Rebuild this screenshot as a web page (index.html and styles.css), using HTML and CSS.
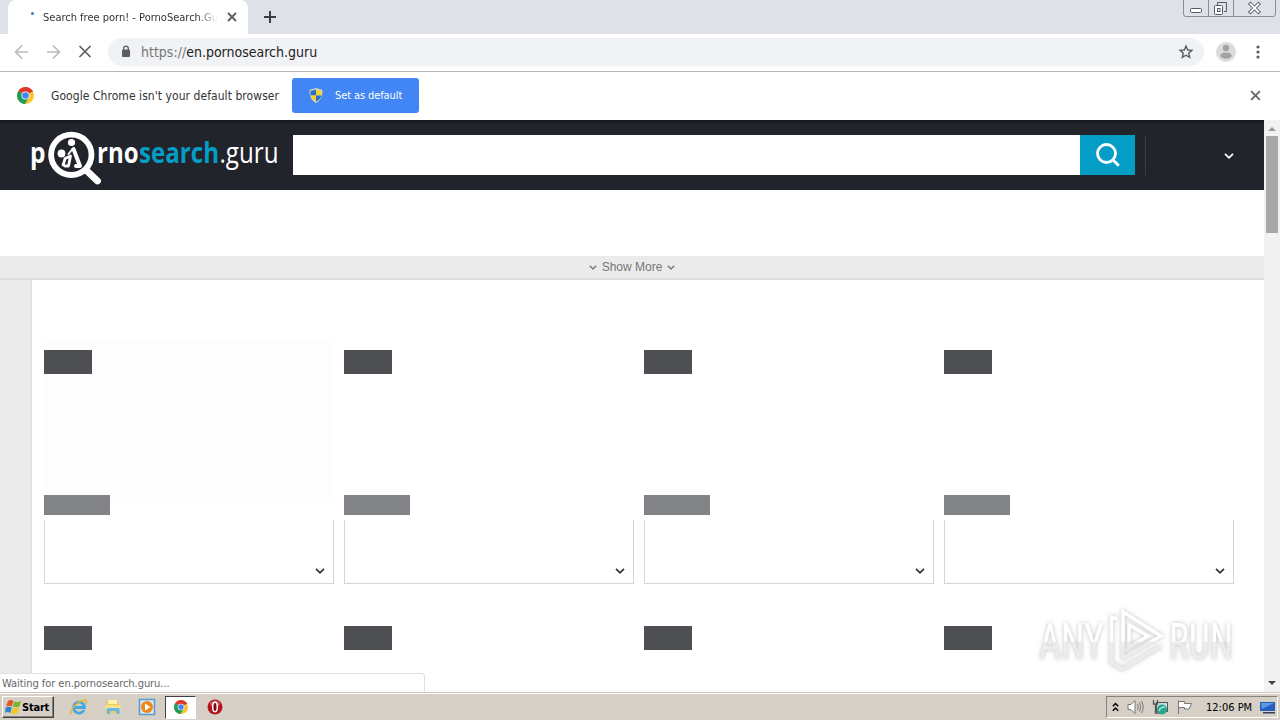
FILE: index.html
```html
<!DOCTYPE html>
<html lang="en">
<head>
    <meta charset="UTF-8">
    <title>Search free porn! - PornoSearch.Guru</title>
    <link rel="stylesheet" href="styles.css">
</head>
<body>
    <svg width="0" height="0" class="defs">
        <symbol id="chrome" viewBox="0 0 16 16">
            <circle cx="8" cy="8" r="8" fill="#fbc52d"/>
            <path d="M8 8 L1.1 4 A8 8 0 0 1 14.9 4 Z" fill="#db3a2d"/>
            <path d="M8 8 L1.1 4 A8 8 0 0 0 7.5 16 L11 10 Z" fill="#1d9d59"/>
            <path d="M8 4 H14.9" stroke="#db3a2d" stroke-width="1"/>
            <circle cx="8" cy="8" r="3.8" fill="#fff"/>
            <circle cx="8" cy="8" r="3.1" fill="#4285f4"/>
        </symbol>
        <symbol id="chevron" viewBox="0 0 10 6">
            <path d="M1 .8 L5 4.8 L9 .8" fill="none" stroke="currentColor" stroke-width="1.7"/>
        </symbol>
        <symbol id="cross" viewBox="0 0 10 10">
            <path d="M1 1 L9 9 M9 1 L1 9" fill="none" stroke="currentColor" stroke-width="1.8"/>
        </symbol>
    </svg>

    <!-- Tab strip -->
    <div class="tabstrip">
        <div class="tab">
            <span class="spinner"></span>
            <span class="tab-title">Search free porn! - PornoSearch.Guru</span>
            <svg class="tab-close" width="10" height="10"><use href="#cross"/></svg>
        </div>
        <svg class="new-tab" width="12" height="12" viewBox="0 0 12 12"><path d="M6 0V12M0 6H12" stroke="#3a3d42" stroke-width="2"/></svg>
        <svg class="window-buttons" width="93" height="17" viewBox="0 0 93 17" fill="none">
            <path d="M.5 0V14Q.5 16.500 3 16.500H90Q92.500 16.500 92.500 14V0M25.500 0V16M50.500 0V16" stroke="#8b8e95"/>
            <rect x="7.500" y="8.500" width="11" height="4" rx="1" fill="#fff" stroke="#555963"/>
            <path d="M34.500 5V2.500H43.500V11.500H41" stroke="#555963"/>
            <rect x="31.500" y="5.500" width="8" height="9" rx="1" fill="#fff" stroke="#555963"/>
            <rect x="34.500" y="8.500" width="2.500" height="3" stroke="#555963"/>
            <path d="M67.500 4L75.500 12M75.500 4L67.500 12" stroke="#555963" stroke-width="3.600" stroke-linecap="square"/>
            <path d="M67.500 4L75.500 12M75.500 4L67.500 12" stroke="#fff" stroke-width="1.800" stroke-linecap="square"/>
        </svg>
    </div>

    <!-- Toolbar -->
    <div class="toolbar">
        <svg width="78" height="16" viewBox="0 0 78 16" fill="none" stroke-width="1.700">
            <path d="M14 8H1.500M8 1.500L1.500 8L8 14.500M33 8H45.500M39 1.500L45.500 8L39 14.500" stroke="#b9bbbd"/>
            <path d="M65.500 2L76.500 13M76.500 2L65.500 13" stroke="#5a5d61"/>
        </svg>
        <div class="omnibox">
            <svg width="10" height="13" viewBox="0 0 10 13"><rect x="1" y="4.500" width="8" height="7.500" rx="1" fill="#5a5e63"/><path d="M2.700 5V3.500A2.300 2.300 0 0 1 7.300 3.500V5" fill="none" stroke="#5a5e63" stroke-width="1.300"/></svg>
            <span class="url"><span class="scheme">https://</span>en.pornosearch.guru</span>
            <svg class="star" width="16" height="16" viewBox="0 0 16 16"><path d="M8 2L9.700 6L13.900 6.400L10.700 9.200L11.700 13.400L8 11.200L4.300 13.400L5.300 9.200L2.100 6.400L6.300 6Z" fill="none" stroke="#5a5d61" stroke-width="1.400"/></svg>
        </div>
        <svg class="avatar" width="20" height="20" viewBox="0 0 20 20"><circle cx="10" cy="10" r="10" fill="#dcdcdc"/><circle cx="10" cy="6" r="3.200" fill="#a3a3a3"/><ellipse cx="10" cy="13.600" rx="5.700" ry="3.200" fill="#a3a3a3"/></svg>
        <svg width="4" height="14" viewBox="0 0 4 14" fill="#5a5d61"><circle cx="2" cy="2" r="1.600"/><circle cx="2" cy="7" r="1.600"/><circle cx="2" cy="12" r="1.600"/></svg>
    </div>

    <div class="infobar">
        <svg width="17" height="17"><use href="#chrome"/></svg>
        <span class="info-text">Google Chrome isn't your default browser</span>
        <button class="default-button">
            <svg width="14" height="15" viewBox="0 0 14 15">
                <path d="M7 0L13.500 2Q14 11 7 15Q0 11 .5 2Z" fill="#d5d9c4"/>
                <path d="M7 1.500V7.500H1.500V3Z" fill="#2c6fc9"/><path d="M7 1.500V7.500H12.500V3Z" fill="#f5d22e"/>
                <path d="M7 7.500V13.700Q2 11 1.600 7.500Z" fill="#f5d22e"/><path d="M7 7.500V13.700Q12 11 12.400 7.500Z" fill="#2c6fc9"/>
            </svg>
            <span>Set as default</span>
        </button>
        <svg class="info-close" width="11" height="11"><use href="#cross"/></svg>
    </div>

    <!-- Page -->
    <div class="viewport">
        <div class="page">
            <header class="site-header">
                <svg class="logo" width="250" height="60" viewBox="0 0 250 60">
                    <g class="logo-text">
                        <text x="0" y="38" textLength="15.500" lengthAdjust="spacingAndGlyphs" class="bold">p</text>
                        <text x="67" y="38" textLength="41.500" lengthAdjust="spacingAndGlyphs" class="bold">rno</text>
                        <text x="109" y="38" textLength="80" lengthAdjust="spacingAndGlyphs" class="bold blue">search</text>
                        <text x="189.500" y="38" textLength="59" lengthAdjust="spacingAndGlyphs">.guru</text>
                    </g>
                    <circle cx="41.300" cy="29.800" r="20.200" fill="none" stroke="#fff" stroke-width="5.800"/>
                    <path d="M56 45L67.500 56" stroke="#fff" stroke-width="6.800" stroke-linecap="round"/>
                    <g fill="none" stroke="#fff" stroke-linecap="round" stroke-linejoin="round">
                        <circle cx="41.500" cy="17.500" r="3.600" fill="#fff" stroke="none"/>
                        <circle cx="31.500" cy="28.500" r="3.900" fill="#fff" stroke="none"/>
                        <path d="M43.500 24L46.500 32L50 41H46" stroke-width="4"/>
                        <path d="M42.500 24L38.500 29" stroke-width="2"/>
                        <path d="M35 33.500L40.500 31L38.500 41H35M35 34L33 40" stroke-width="2.800"/>
                    </g>
                </svg>
                <div class="search">
                    <div class="search-input"></div>
                    <div class="search-button">
                        <svg width="24" height="24" viewBox="0 0 24 24" fill="none" stroke="#fff" stroke-width="2.800"><circle cx="10.500" cy="10.500" r="9"/><path d="M16.800 16.800L22.800 22.800"/></svg>
                    </div>
                </div>
                <div class="language"><svg width="10" height="6"><use href="#chevron"/></svg></div>
            </header>
            <div class="categories"></div>
            <div class="show-more">
                <svg width="8" height="5"><use href="#chevron"/></svg>
                <span>Show More</span>
                <svg width="8" height="5"><use href="#chevron"/></svg>
            </div>
            <main class="content">
                <div class="grid">
                    <div class="card"><div class="thumb loading"><span class="badge"></span><span class="source"></span></div><div class="details"><svg width="10" height="6"><use href="#chevron"/></svg></div></div>
                    <div class="card"><div class="thumb"><span class="badge"></span><span class="source"></span></div><div class="details"><svg width="10" height="6"><use href="#chevron"/></svg></div></div>
                    <div class="card"><div class="thumb"><span class="badge"></span><span class="source"></span></div><div class="details"><svg width="10" height="6"><use href="#chevron"/></svg></div></div>
                    <div class="card"><div class="thumb"><span class="badge"></span><span class="source"></span></div><div class="details"><svg width="10" height="6"><use href="#chevron"/></svg></div></div>
                    <div class="card"><div class="thumb"><span class="badge"></span></div></div>
                    <div class="card"><div class="thumb"><span class="badge"></span></div></div>
                    <div class="card"><div class="thumb"><span class="badge"></span></div></div>
                    <div class="card"><div class="thumb"><span class="badge"></span></div></div>
                </div>
            </main>
        </div>
        <div class="scrollbar">
            <svg width="8" height="4" viewBox="0 0 8 4"><path d="M0 4L4 0L8 4Z" fill="#999"/></svg>
            <div class="scroll-thumb"></div>
            <svg class="scroll-down" width="8" height="4" viewBox="0 0 8 4"><path d="M0 0L4 4L8 0Z" fill="#444"/></svg>
        </div>
        <div class="status-bubble">Waiting for en.pornosearch.guru...</div>
        <svg class="watermark" width="206" height="70" viewBox="0 0 206 70">
            <defs><linearGradient id="fade" x2="0" y2="70" gradientUnits="userSpaceOnUse"><stop offset=".5" stop-color="#fff"/><stop offset=".52" stop-color="#ececec"/></linearGradient></defs>
            <g class="watermark-text">
                <text x="4" y="53" textLength="65" lengthAdjust="spacingAndGlyphs">ANY</text>
                <text x="134" y="53" textLength="64" lengthAdjust="spacingAndGlyphs">RUN</text>
            </g>
            <path d="M82 13L76.500 11V57L87 63L126 40M88 6V52L126 30ZM94 19V41L113 30Z" fill="none" stroke="url(#fade)" stroke-width="3.500"/>
        </svg>
    </div>

    <!-- Taskbar -->
    <div class="taskbar">
        <button class="start">
            <svg width="17" height="16" viewBox="0 0 17 16"><path d="M3 2Q6 0 8.500 2L7 7.500Q4 6 1 7.500Z" fill="#e4572b"/><path d="M9.500 2.500Q13 4 16 2L14.500 7.500Q11 9 8 7.500Z" fill="#76b82a"/><path d="M.8 8.500Q4 7 6.800 8.500L5.300 14Q2 12 0 14Z" fill="#2d86c7"/><path d="M7.800 8.800Q11 10 14.200 8.500L12.700 14Q9 16 6.300 14Z" fill="#f8c51c"/></svg>
            <span>Start</span>
        </button>
        <div class="launcher">
            <svg width="18" height="18" viewBox="0 0 18 18" fill="none"><path d="M14 12A5.500 5.500 0 1 1 14.500 9.500H5" stroke="#46a8de" stroke-width="2.800"/><path d="M2 15Q-1 17 1.500 12Q7 3 15 2Q18 2 15.500 6" stroke="#eab52d" stroke-width="1.400"/></svg>
            <svg width="18" height="18" viewBox="0 0 18 18"><path d="M2 3H7L8 5H15V15H2Z" fill="#edc95b"/><path d="M4 2H13V6H4Z" fill="#fff1ae"/><path d="M1.500 7H16.500V11H1.500Z" fill="#f9e38c"/><path d="M3 16V10H15.500V16H12.500V13H6V16Z" fill="#69b7e3"/></svg>
            <svg width="18" height="18" viewBox="0 0 18 18"><rect x="1.500" y="1.500" width="15" height="15" fill="#d3e9f7" stroke="#559bd0" stroke-width="1.500"/><circle cx="9" cy="9" r="6" fill="#f08716"/><path d="M7 5.500V12.500L12.500 9Z" fill="#fff"/></svg>
            <div class="active-app"><svg width="14" height="14"><use href="#chrome"/></svg></div>
            <svg width="16" height="16" viewBox="0 0 16 16"><circle cx="8" cy="8" r="7.500" fill="#b5141d"/><path d="M3 4Q8-1 13 4L12 7H4Z" fill="#d95a5f"/><ellipse cx="8" cy="8" rx="2.300" ry="4.700" fill="#7c0a10" stroke="#fff" stroke-width="1.500"/></svg>
        </div>
        <div class="tray">
            <svg width="7" height="10" viewBox="0 0 7 10" fill="none" stroke="#000" stroke-width="1.500"><path d="M.8 4.300L3.500 1.500L6.200 4.300M.8 8.800L3.500 6L6.200 8.800"/></svg>
            <svg width="17" height="16" viewBox="0 0 17 16" fill="none" stroke="#777"><path d="M1 5.500H4L8 1.500V14.500L4 10.500H1Z" fill="#fff"/><path d="M10.500 5Q12 8 10.500 11M12.500 3.500Q15 8 12.500 12.500M14.500 2Q18 8 14.500 14"/></svg>
            <svg width="16" height="16" viewBox="0 0 16 16"><rect x="4.500" y="3.500" width="11" height="9" fill="#c8dce9" stroke="#555"/><path d="M1.500 1V5H5.500V1M3.500 5V14H8" fill="none" stroke="#555" stroke-width="1.300"/><circle cx="10" cy="10.500" r="5" fill="#28a690"/><path d="M7 12Q8 8 13 8" stroke="#a6e0cc" stroke-width="1.500" fill="none"/></svg>
            <svg width="17" height="16" viewBox="0 0 17 16"><path d="M2.500 15V1.500M3 2.500H8.500V4.500H15.500L13 10H8.500V8.500H3" fill="#fff" stroke="#777"/></svg>
            <span class="clock">12:06 PM</span>
            <svg class="desktop" width="15" height="13" viewBox="0 0 15 13"><path d="M0 1H15V10H0Z" fill="#245fbd"/><path d="M1 2H14L2 8Z" fill="#5d99e3"/><path d="M3 11H15V12.500H3Z" fill="#353f56"/></svg>
        </div>
    </div>
</body>
</html>
```

FILE: styles.css
```css
* {
    box-sizing: border-box;
}
body {
    margin: 0;
    width: 1280px;
    height: 720px;
    overflow: hidden;
    display: flex;
    flex-direction: column;
    background: #fff;
    font-family: "DejaVu Sans Condensed", "DejaVu Sans", sans-serif;
    font-stretch: condensed;
    font-size: 11px;
    color: #333;
}
svg {
    flex-shrink: 0;
}
button {
    font: inherit;
    border: none;
}
.defs {
    position: absolute;
}

/* Browser window */
.tabstrip {
    height: 34px;
    background: #dee1e8;
    display: flex;
    align-items: center;
    padding-left: 8px;
}
.tab {
    width: 240px;
    height: 34px;
    background: #fff;
    border-radius: 8px 8px 0 0;
    display: flex;
    align-items: center;
    padding-left: 23px;
}
.spinner {
    width: 3px;
    height: 3px;
    border-radius: 50%;
    background: #3b78c0;
    margin-bottom: 7px;
}
.tab-title {
    width: 175px;
    margin-left: 9px;
    white-space: nowrap;
    overflow: hidden;
    -webkit-mask-image: linear-gradient(90deg, #000 88%, transparent);
    mask-image: linear-gradient(90deg, #000 88%, transparent);
}
.tab-close {
    margin-left: 9px;
    color: #5a5d61;
}
.new-tab {
    margin-left: 16px;
}
.window-buttons {
    margin-left: auto;
    margin-right: 4px;
    align-self: flex-start;
}
.toolbar {
    height: 38px;
    border-bottom: 1px solid #b6b6b6;
    display: flex;
    align-items: center;
    padding: 0 20px 2px 14px;
}
.omnibox {
    width: 1096px;
    height: 28px;
    margin-left: 16px;
    border-radius: 14px;
    background: #f0f2f5;
    display: flex;
    align-items: center;
    padding: 0 10px 0 13px;
}
.url {
    margin-left: 10px;
    font-size: 14px;
    color: #222;
}
.scheme {
    color: #777;
}
.star {
    margin-left: auto;
}
.avatar {
    margin: 0 20px 0 12px;
}
.infobar {
    height: 48px;
    display: flex;
    align-items: center;
    padding: 0 19px 1px 17px;
}
.info-text {
    width: 228px;
    margin-left: 17px;
    font-size: 12px;
    letter-spacing: 0.06px;
    white-space: nowrap;
}
.default-button {
    width: 127px;
    height: 35px;
    margin-left: 13px;
    border-radius: 3px;
    background: #4285f4;
    color: #fff;
    display: flex;
    align-items: center;
    padding: 0 0 0 17px;
}
.default-button span {
    margin-left: 12px;
    letter-spacing: -0.1px;
    white-space: nowrap;
}
.info-close {
    margin-left: auto;
    color: #6a6a6a;
}

/* Site */
.viewport {
    position: relative;
    height: 572px;
    display: flex;
}
.page {
    width: 1264px;
    display: flex;
    flex-direction: column;
}
.site-header {
    height: 70px;
    background: linear-gradient(#15161b, #22242c 4px);
    display: flex;
    align-items: center;
    padding-left: 30px;
}
.logo {
    margin-bottom: 1px;
}
.logo-text {
    font-family: "Open Sans", "Noto Sans", sans-serif;
    font-size: 29px;
    font-stretch: normal;
    fill: #fff;
}
.logo-text .bold {
    font-weight: 700;
}
.logo-text .blue {
    fill: #049dc5;
}
.search {
    width: 842px;
    height: 40px;
    margin-left: 13px;
    display: flex;
}
.search-input {
    flex: 1;
    background: #fff;
}
.search-button {
    width: 55px;
    background: #049dc5;
    display: flex;
    align-items: center;
    justify-content: center;
}
.language {
    height: 40px;
    width: 89px;
    margin-left: 10px;
    border-left: 1px solid #3d3e45;
    color: #fff;
    display: flex;
    align-items: center;
    justify-content: flex-end;
    padding-top: 1px;
}
.categories {
    height: 66px;
}
.show-more {
    height: 24px;
    background: #ebebeb;
    border-bottom: 2px solid #dedede;
    display: flex;
    align-items: center;
    justify-content: center;
    gap: 5px;
    font-family: "Liberation Sans", Arial, sans-serif;
    font-size: 12px;
    color: #777;
}
.content {
    flex: 1;
    min-height: 0;
    overflow: hidden;
    background: linear-gradient(90deg, #ebebeb 30px, #dcdcdc 32px, #fff 32px);
    padding: 60px 0 0 44px;
}
.grid {
    display: grid;
    grid-template-columns: repeat(4, 290px);
    gap: 32px 10px;
}
.thumb {
    height: 180px;
    padding: 10px 0 5px;
    display: flex;
    flex-direction: column;
    justify-content: space-between;
}
.loading {
    background: linear-gradient(#fdfdfd, #fdfdfd) 0 0 / 100% 163px no-repeat;
}
.badge {
    width: 48px;
    height: 24px;
    background: #4d4f52;
}
.source {
    width: 66px;
    height: 20px;
    background: #828386;
}
.details {
    height: 64px;
    border: 1px solid #d5d5d5;
    border-top: none;
    display: flex;
    align-items: flex-end;
    justify-content: flex-end;
    padding: 0 8px 9px 0;
}
.scrollbar {
    width: 16px;
    background: #f1f1f1;
    display: flex;
    flex-direction: column;
    align-items: center;
    padding: 7px 0;
}
.scroll-thumb {
    width: 12px;
    height: 97px;
    margin-top: 5px;
    background: #a8a8a8;
}
.scroll-down {
    margin-top: auto;
}
.status-bubble {
    position: absolute;
    left: 0;
    bottom: 0;
    width: 425px;
    height: 19px;
    padding: 3px 2px;
    background: #fff;
    border: 1px solid #e0e0e0;
    border-left: none;
    border-bottom: none;
    border-radius: 0 4px 0 0;
    line-height: 13px;
    letter-spacing: -0.05px;
    color: #666;
}
.watermark {
    position: absolute;
    left: 1035px;
    top: 486px;
    overflow: visible;
    filter: drop-shadow(0 0 2px rgba(0, 0, 0, 0.25));
}
.watermark-text {
    font-family: Roboto, sans-serif;
    font-size: 50px;
    fill: url(#fade);
}

/* Windows taskbar */
.taskbar {
    height: 28px;
    background: #d5cfc6;
    border-top: 1px solid #c8c4bc;
    box-shadow: inset 0 1px #fff;
    display: flex;
    align-items: center;
    padding: 1px 2px 0;
}
.start {
    width: 52px;
    height: 22px;
    padding: 0 0 0 2px;
    background: #d5cfc6;
    border: 1px solid;
    border-color: #fff #404040 #404040 #fff;
    box-shadow: inset -1px -1px #87837c;
    display: flex;
    align-items: center;
    font-weight: bold;
    color: #000;
}
.start span {
    letter-spacing: -0.2px;
}
.launcher {
    display: flex;
    align-items: center;
    margin-left: 16px;
    gap: 16px;
}
.active-app {
    width: 31px;
    height: 23px;
    margin: 0 -5px 0 -7px;
    background: #fff;
    border: 1px solid #404040;
    border-right-color: #fff;
    border-bottom-color: #fff;
    display: flex;
    align-items: center;
    justify-content: center;
}
.tray {
    width: 172px;
    height: 22px;
    margin-left: auto;
    border: 1px solid;
    border-color: #87837c #fff #fff #87837c;
    display: flex;
    align-items: center;
    padding-left: 5px;
    gap: 8px;
    color: #000;
}
.clock {
    width: 46px;
    margin-left: 5px;
    white-space: nowrap;
}
```
